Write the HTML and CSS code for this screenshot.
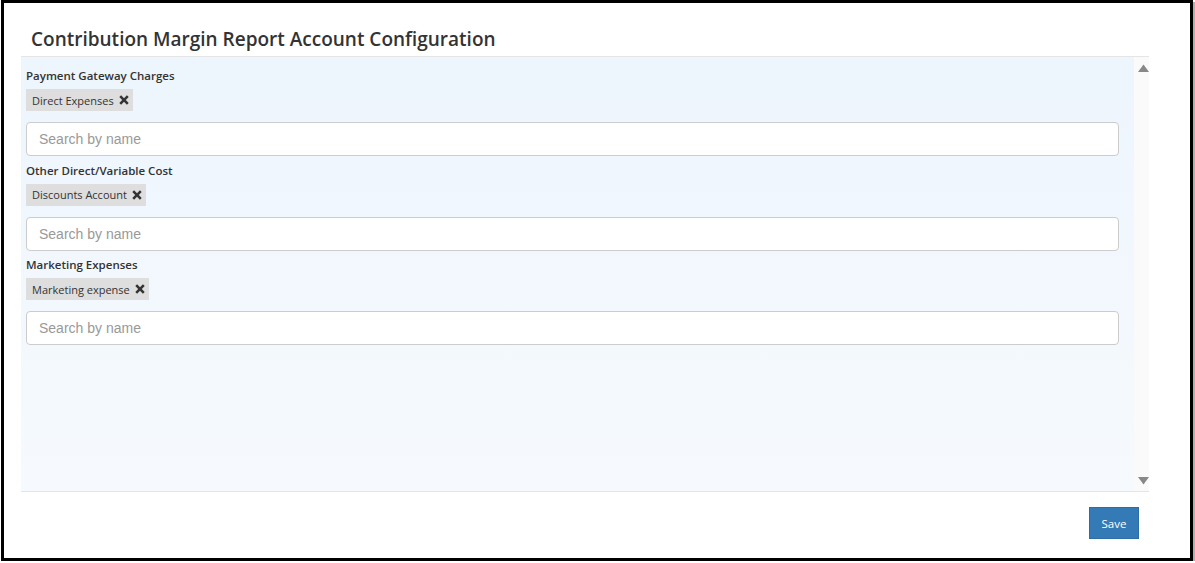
FILE: index.html
```html
<!DOCTYPE html>
<html>
<head>
<meta charset="utf-8">
<link rel="stylesheet" href="styles.css">
</head>
<body>
<div class="frame">
  <div class="dialog">
    <div class="header">
      <h1 class="title">Contribution Margin Report Account Configuration</h1>
    </div>
    <div class="panel">
      <div class="panel-body">
        <div class="group">
          <div class="label">Payment Gateway Charges</div>
          <div class="tags">
            <span class="tag">Direct Expenses <svg class="x" viewBox="0 0 10 10"><path d="M2.1 0.3 L5 3.2 L7.9 0.3 L9.7 2.1 L6.8 5 L9.7 7.9 L7.9 9.7 L5 6.8 L2.1 9.7 L0.3 7.9 L3.2 5 L0.3 2.1 Z"/></svg></span>
          </div>
          <input class="search" type="text" placeholder="Search by name">
        </div>
        <div class="group">
          <div class="label">Other Direct/Variable Cost</div>
          <div class="tags">
            <span class="tag">Discounts Account <svg class="x" viewBox="0 0 10 10"><path d="M2.1 0.3 L5 3.2 L7.9 0.3 L9.7 2.1 L6.8 5 L9.7 7.9 L7.9 9.7 L5 6.8 L2.1 9.7 L0.3 7.9 L3.2 5 L0.3 2.1 Z"/></svg></span>
          </div>
          <input class="search" type="text" placeholder="Search by name">
        </div>
        <div class="group">
          <div class="label">Marketing Expenses</div>
          <div class="tags">
            <span class="tag">Marketing expense <svg class="x" viewBox="0 0 10 10"><path d="M2.1 0.3 L5 3.2 L7.9 0.3 L9.7 2.1 L6.8 5 L9.7 7.9 L7.9 9.7 L5 6.8 L2.1 9.7 L0.3 7.9 L3.2 5 L0.3 2.1 Z"/></svg></span>
          </div>
          <input class="search" type="text" placeholder="Search by name">
        </div>
      </div>
      <div class="scrollbar">
        <svg class="arrow" viewBox="0 0 11 8"><path d="M5.5 0.5 L11 8 L0 8 Z"/></svg>
        <svg class="arrow" viewBox="0 0 11 8"><path d="M0 0 L11 0 L5.5 7.5 Z"/></svg>
      </div>
    </div>
    <div class="footer">
      <button class="btn-save">Save</button>
    </div>
  </div>
</div>
</body>
</html>
```
FILE: styles.css
```css
html, body {
  margin: 0;
  padding: 0;
  background: #fff;
}
body {
  font-family: "Open Sans", "Noto Sans", sans-serif;
  color: #333;
}
.frame {
  margin-left: 1px;
  width: 1192px;
  height: 561px;
  box-sizing: border-box;
  border: 3px solid #000;
  box-shadow: 2px 2px 0 #b0b0b0;
  background: #fff;
}
.dialog {
  width: 1128px;
  margin-left: 17px;
}
.header {
  height: 53px;
  box-sizing: content-box;
  border-bottom: 1px solid #e5e5e5;
}
.title {
  margin: 0;
  padding: 22px 0 0 10px;
  font-size: 19px;
  line-height: 28px;
  font-weight: 600;
  color: #333;
}
.panel {
  display: flex;
  height: 434px;
  border-bottom: 1px solid #e5e5e5;
  background: linear-gradient(#edf5fd, #f6fafe);
}
.panel-body {
  flex: 1;
  padding: 9px 15px 0 5px;
}
.group {
  display: flex;
  flex-direction: column;
  margin-bottom: 4.5px;
}
.label {
  font-size: 11.5px;
  font-weight: 600;
  line-height: 20px;
  color: #333;
}
.tags {
  display: flex;
  margin-top: 3px;
}
.tag {
  display: inline-flex;
  align-items: center;
  height: 22px;
  padding: 0 4px 0 6px;
  background: #dedede;
  font-size: 11px;
  color: #333;
}
.x {
  width: 10px;
  height: 10px;
  margin-left: 5px;
  fill: #333;
}
.search {
  margin-top: 11px;
  height: 34px;
  box-sizing: border-box;
  width: 100%;
  border: 1px solid #ccc;
  border-radius: 4px;
  padding: 6px 12px;
  font-family: "Liberation Sans", Arial, sans-serif;
  font-size: 14px;
  color: #555;
  background: #fff;
}
.search::placeholder {
  color: #999;
}
.scrollbar {
  width: 15px;
  background: #fafafa;
  display: flex;
  flex-direction: column;
  justify-content: space-between;
  align-items: flex-end;
  padding: 7px 0 6px;
}
.arrow {
  width: 11px;
  height: 8px;
  fill: #888;
}
.footer {
  display: flex;
  justify-content: flex-end;
  padding: 15px 10px 0 0;
}
.btn-save {
  width: 50px;
  height: 32px;
  background: #337ab7;
  border: 1px solid #2e6da4;
  color: #fff;
  font-family: "Open Sans", sans-serif;
  font-size: 11.5px;
  padding: 0;
}
```
